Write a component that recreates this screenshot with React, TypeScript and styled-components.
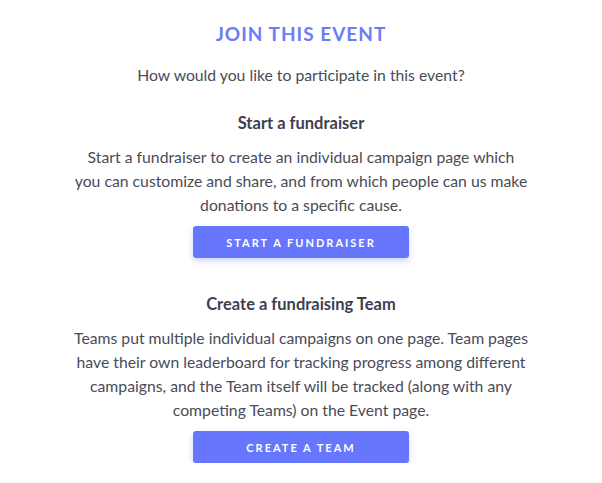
import React from "react";
import styled, { createGlobalStyle } from "styled-components";

const Global = createGlobalStyle`
  html, body { margin: 0; padding: 0; background: #fff; }
  body { font-family: Lato, "Noto Sans", sans-serif; -webkit-font-smoothing: antialiased; }
`;

const Page = styled.div`
  display: flex;
  flex-direction: column;
  align-items: center;
  padding-top: 22px;
  text-align: center;
`;

const Title = styled.h1`
  margin: 0;
  font-size: 19px;
  line-height: 24px;
  font-weight: 700;
  letter-spacing: 1px;
  color: #6c7cf5;
`;

const Lead = styled.p`
  margin: 17px 0 0;
  font-size: 15.75px;
  line-height: 24px;
  color: #4a4b57;
`;

const Section = styled.section<{ $top: number }>`
  display: flex;
  flex-direction: column;
  align-items: center;
  margin-top: ${(p) => p.$top}px;
`;

const Heading = styled.h2`
  margin: 0;
  font-size: 16.5px;
  line-height: 24px;
  font-weight: 700;
  color: #3d3f50;
`;

const Body = styled.p`
  margin: 10px 0 0;
  max-width: 455px;
  font-size: 15.75px;
  line-height: 24px;
  color: #4a4b57;
`;

const Button = styled.button`
  margin-top: 9px;
  width: 216px;
  height: 32px;
  border: none;
  border-radius: 3px;
  background: #6676fd;
  color: #fff;
  font-family: Lato, "Noto Sans", sans-serif;
  font-size: 11px;
  font-weight: 700;
  letter-spacing: 2px;
  text-transform: uppercase;
  box-shadow: 0 3px 6px rgba(102, 118, 253, 0.3);
  cursor: pointer;
`;

export default function App() {
  return (
    <>
      <Global />
      <Page>
        <Title>JOIN THIS EVENT</Title>
        <Lead>How would you like to participate in this event?</Lead>
        <Section $top={24}>
          <Heading>Start a fundraiser</Heading>
          <Body>
            Start a fundraiser to create an individual campaign page which you can customize and share, and from which people can us make donations to a specific cause.
          </Body>
          <Button>Start a fundraiser</Button>
        </Section>
        <Section $top={34}>
          <Heading>Create a fundraising Team</Heading>
          <Body>
            Teams put multiple individual campaigns on one page. Team pages have their own leaderboard for tracking progress among different campaigns, and the Team itself will be tracked (along with any competing Teams) on the Event page.
          </Body>
          <Button>Create a team</Button>
        </Section>
      </Page>
    </>
  );
}
